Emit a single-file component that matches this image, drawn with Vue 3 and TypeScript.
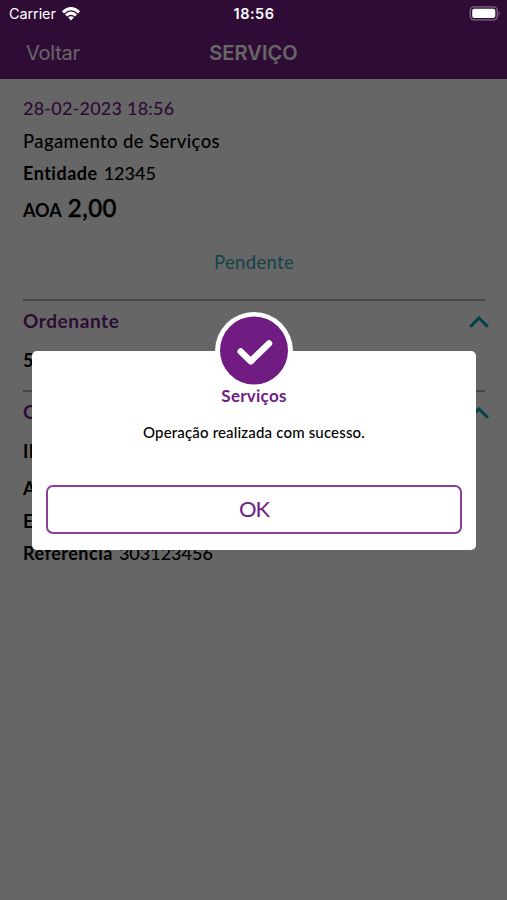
<script setup lang="ts">
interface Row { label: string; value: string; height: number; tone: string }

const details: Row[] = [
  { label: 'IBAN', value: '', height: 37, tone: 'iban' },
  { label: 'AOA', value: '2,00', height: 33, tone: 'amount' },
  { label: 'Entidade', value: '12345', height: 32, tone: 'entity' },
  { label: 'Referência', value: '303123456', height: 33, tone: 'reference' },
]
</script>

<template>
  <div class="screen">
    <div class="status">
      <div class="carrier">
        <span class="carrier-name">Carrier</span>
        <svg class="wifi" viewBox="0 0 18 14" width="18" height="14">
          <path d="M0 4.2Q9 -4.2 18 4.2L16.100 6.400Q9 0 1.900 6.400ZM3 7.200Q9 1.700 15 7.200L13 9.400Q9 6 5 9.400ZM6.100 10.300Q9 8 11.900 10.300L9 13.500Z" fill="#fff" />
        </svg>
      </div>
      <span class="clock">18:56</span>
      <svg class="battery" viewBox="0 0 32 15" width="32" height="15">
        <rect x="1.3" y=".8" width="27" height="13" rx="3.8" fill="none" stroke="#806887" stroke-width="1.3" />
        <rect x="3.2" y="2.7" width="23.1" height="9.2" rx="2" fill="#fff" />
        <path d="M29.700 5.2Q31.800 7.3 29.700 9.4Z" fill="#806887" />
      </svg>
    </div>

    <header class="nav">
      <span class="back">Voltar</span>
      <h1 class="title">SERVIÇO</h1>
    </header>

    <main class="content">
      <p class="line date">28-02-2023 18:56</p>
      <p class="line service">Pagamento de Serviços</p>
      <p class="line entity"><b>Entidade</b><span>12345</span></p>
      <p class="line total"><b>AOA</b><span>2,00</span></p>
      <div class="state"><span>Pendente</span></div>

      <section class="group">
        <div class="group-head">
          <h2>Ordenante</h2>
          <svg class="chevron" viewBox="0 0 20 12" width="20" height="12"><path d="M1.2 10.8L10 2L18.8 10.8" /></svg>
        </div>
        <p class="line account"><b>5</b></p>
      </section>

      <section class="group">
        <div class="group-head">
          <h2>Operação</h2>
          <svg class="chevron" viewBox="0 0 20 12" width="20" height="12"><path d="M1.2 10.8L10 2L18.8 10.8" /></svg>
        </div>
        <div class="details">
          <p v-for="row in details" :key="row.label" class="line" :class="row.tone" :style="{ height: row.height + 'px' }">
            <b>{{ row.label }}</b><span>{{ row.value }}</span>
          </p>
        </div>
      </section>
    </main>

    <div class="overlay">
      <div class="dialog" role="alertdialog">
        <div class="badge">
          <svg viewBox="0 0 78 78" width="78" height="78">
            <circle cx="39" cy="39" r="39" fill="#fff" />
            <circle cx="39" cy="38.500" r="34" fill="#701c82" />
            <path d="M25.700 39.5L35.700 49.300L54 31.500" fill="none" stroke="#fff" stroke-width="6.500" stroke-linecap="round" stroke-linejoin="round" />
          </svg>
        </div>
        <h3>Serviços</h3>
        <p class="message">Operação realizada com sucesso.</p>
        <button type="button">OK</button>
      </div>
    </div>
  </div>
</template>

<style>
body { margin: 0; background: #666; }
</style>

<style scoped>
.screen {
  position: relative;
  width: 507px;
  height: 900px;
  overflow: hidden;
  box-sizing: border-box;
  background: #fff;
  color: #000;
  font-family: Lato, "Open Sans", sans-serif;
  font-variant-ligatures: none;
}
h1, h2, h3, p { margin: 0; }
.status {
  position: absolute;
  z-index: 2;
  inset: 0 0 auto;
  height: 27px;
  padding: 0 6px 0 9px;
  box-sizing: border-box;
  display: grid;
  grid-template-columns: 1fr auto 1fr;
  align-items: center;
  color: #fff;
  font-family: Inter, sans-serif;
}
.carrier { display: flex; align-items: center; gap: 6px; font-size: 14.5px; }
.carrier-name { letter-spacing: -.1px; }
.clock { position: relative; left: -1px; font-size: 14.5px; font-weight: 600; letter-spacing: .5px; }
.battery { justify-self: end; }
.nav {
  height: 79px;
  padding: 26px 26px 0;
  box-sizing: border-box;
  display: grid;
  grid-template-columns: 1fr auto 1fr;
  align-items: center;
  background: #761e85;
  color: #fff;
  font-family: Inter, sans-serif;
}
.back { font-size: 20px; letter-spacing: -.25px; }
.title { font-size: 20px; font-weight: 600; letter-spacing: .1px; }
.content { padding: 13px 22px 0 23px; }
.line { display: flex; align-items: baseline; gap: 6px; white-space: nowrap; font-size: 18px; font-weight: 500; line-height: 32px; }
.line b { font-weight: 700; letter-spacing: .5px; }
.date { height: 33px; color: #701c82; letter-spacing: .23px; }
.service { height: 32px; font-size: 18.5px; letter-spacing: .38px; }
.entity { height: 32px; }
.total { height: 48px; line-height: 38px; }
.total b { letter-spacing: 0; }
.total span { font-size: 24px; letter-spacing: .5px; -webkit-text-stroke: .5px #000; }
.state {
  height: 40px;
  margin: 5px 0 17px;
  display: flex;
  align-items: center;
  justify-content: center;
  border-top: 1px solid #fbfbfb;
  border-bottom: 1px solid #fbfbfb;
  box-sizing: border-box;
  color: #36a7bc;
  font-size: 18.5px;
  letter-spacing: .35px;
}
.group { border-top: 2px solid #b0b0b0; box-sizing: border-box; height: 91px; }
.group-head { display: flex; align-items: center; justify-content: space-between; height: 40px; margin-right: -4px; }
.group-head h2 { font-size: 19px; line-height: 24px; font-weight: 700; letter-spacing: .6px; color: #701c82; }
.chevron { margin-top: 1px; }
.chevron path { fill: none; stroke: #00a4b8; stroke-width: 3; }
.account { line-height: 38px; }
.details { padding-top: 3px; }
.overlay { position: absolute; z-index: 1; inset: 0; background: rgba(0, 0, 0, .6); }
.dialog {
  position: absolute;
  left: 32px;
  top: 351px;
  width: 444px;
  height: 199px;
  box-sizing: border-box;
  padding: 34px 14px 16px;
  display: flex;
  flex-direction: column;
  align-items: center;
  border-radius: 5px;
  background: #fff;
}
.badge { position: absolute; top: -39px; left: 183px; height: 78px; }
.dialog h3 { font-size: 17px; line-height: 22px; font-weight: 700; letter-spacing: .25px; color: #701c82; }
.message { margin-top: 15px; font-size: 15px; line-height: 20px; font-weight: 500; letter-spacing: .17px; white-space: nowrap; }
.dialog button {
  width: 416px;
  height: 49px;
  margin-top: auto;
  padding: 0 0 2px;
  border: 2px solid #8b3e9a;
  border-radius: 7px;
  background: #fff;
  color: #701c82;
  font: 22px Lato, sans-serif;
  letter-spacing: -1px;
}
</style>
